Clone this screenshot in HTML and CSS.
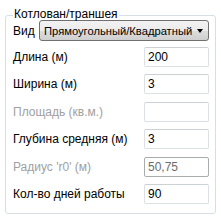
FILE: index.html
```html
<!DOCTYPE html>
<html lang="ru">

<head>
    <meta charset="UTF-8">
    <title>Котлован/траншея</title>
    <link rel="stylesheet" href="styles.css">
</head>

<body>

    <fieldset class="group-box">
        <legend>Котлован/траншея</legend>

        <div class="kind-row">
            <label for="kind">Вид</label>
            <div class="combo" id="kind">
                <span>Прямоугольный/Квадратный</span>
                <span class="combo-arrow"></span>
            </div>
        </div>

        <div class="field-list">
            <div class="field-row">
                <label for="length">Длина (м)</label>
                <input type="text" id="length" value="200">
            </div>
            <div class="field-row">
                <label for="width">Ширина (м)</label>
                <input type="text" id="width" value="3">
            </div>
            <div class="field-row disabled">
                <label for="area">Площадь (кв.м.)</label>
                <input type="text" id="area" value="" disabled>
            </div>
            <div class="field-row">
                <label for="depth">Глубина средняя (м)</label>
                <input type="text" id="depth" value="3">
            </div>
            <div class="field-row readonly">
                <label for="radius">Радиус 'r0' (м)</label>
                <input type="text" id="radius" value="50,75" readonly>
            </div>
            <div class="field-row">
                <label for="days">Кол-во дней работы</label>
                <input type="text" id="days" value="90">
            </div>
        </div>
    </fieldset>

</body>

</html>
```

FILE: styles.css
```css
:root {
    --bg-color: #ffffff;
    --group-border: #d5dfe5;
    --text-color: #000000;
    --disabled-text: #a0a0a0;
    --input-border: #dbe0e5;
}

body {
    margin: 0;
    padding: 0;
    background-color: var(--bg-color);
    font-family: "Liberation Sans", Arial, sans-serif;
    font-size: 12px;
    color: var(--text-color);
}

.group-box {
    box-sizing: border-box;
    width: 211px;
    height: 205px;
    margin: 9px 0 0 5px;
    padding: 0 6px 0 7px;
    border: 1px solid var(--group-border);
    border-radius: 3px;
}

.group-box legend {
    padding: 0 1px;
    margin-left: 0;
    line-height: 13px;
    position: relative;
    top: -1px;
}

.kind-row {
    display: flex;
    align-items: center;
    margin-top: -2px;
    white-space: nowrap;
}

.kind-row label {
    width: 26px;
}

.combo {
    box-sizing: border-box;
    display: flex;
    flex: 1;
    align-items: center;
    justify-content: space-between;
    height: 21px;
    padding: 0 5px 0 4px;
    border: 1px solid #707070;
    border-radius: 3px;
    font-size: 11.2px;
    background: linear-gradient(#f2f2f2 0%, #ebebeb 50%, #dddddd 51%, #cfcfcf 100%);
}

.combo-arrow {
    width: 0;
    height: 0;
    border-left: 3.5px solid transparent;
    border-right: 3.5px solid transparent;
    border-top: 4px solid #000;
}

.field-list {
    display: flex;
    flex-direction: column;
    gap: 7.4px;
    margin-top: 6px;
}

.field-row {
    display: flex;
    align-items: center;
    justify-content: space-between;
}

.field-row input {
    box-sizing: border-box;
    width: 65px;
    height: 20px;
    margin: 0;
    padding: 0 3px;
    border: 1px solid var(--input-border);
    border-top-color: #ccd1d6;
    border-radius: 2px;
    font-family: inherit;
    font-size: 12px;
    color: var(--text-color);
    background: #fff;
    outline: none;
}

.field-row.disabled label,
.field-row.readonly label {
    color: var(--disabled-text);
}

.field-row.readonly input {
    border-color: #a9acaf;
    color: #6d6d6d;
}
```
